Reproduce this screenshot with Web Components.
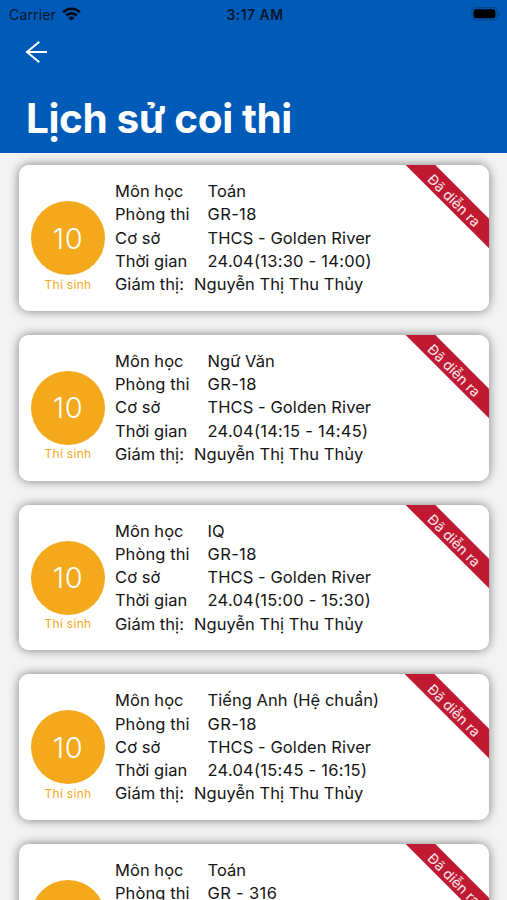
<!DOCTYPE html>
<html lang="vi">
<head>
  <meta charset="utf-8">
  <meta name="viewport" content="width=device-width, initial-scale=1.0">
  <title>Lịch sử coi thi</title>
  <style>
    * { box-sizing: border-box; }
    html { overflow: hidden; }
    body {
      margin: 0;
      height: 900px;
      overflow: hidden;
      background: #f4f4f4;
      font-family: Inter, 'Liberation Sans', sans-serif;
    }
  </style>
</head>
<body>
  <template id="status-bar">
    <style>
      :host {
        display: grid;
        grid-template-columns: 1fr auto 1fr;
        align-items: center;
        height: 28px;
        padding: 0 6px 0 9px;
        color: #06162c;
        font-size: 14px;
      }
      .left { display: flex; align-items: center; gap: 6px; letter-spacing: 0.15px; }
      .time { font-weight: 600; letter-spacing: 0.45px; }
      .battery { justify-self: end; }
      svg { display: block; }
    </style>
    <div class="left">
      <span><slot name="carrier"></slot></span>
      <svg width="19" height="14" viewBox="0 0 19 14" fill="none" stroke="#020b18" stroke-width="2.7">
        <path d="M1.2 5.2a11.7 11.7 0 0 1 16.6 0"/>
        <path d="M4.2 8.5a7.5 7.5 0 0 1 10.6 0"/>
        <path d="M9.5 13.8 6.4 10.7a4.4 4.4 0 0 1 6.2 0z" fill="#020b18" stroke="none"/>
      </svg>
    </div>
    <span class="time"><slot name="time"></slot></span>
    <svg class="battery" width="30" height="14" viewBox="0 0 30 14">
      <rect x=".9" y=".6" width="25.2" height="12.4" rx="3.6" fill="none" stroke="#034485" stroke-width="1.1"/>
      <rect x="2.6" y="2.3" width="21.8" height="9" rx="2.2" fill="#000"/>
      <path d="M27.6 4.8c1.9.7 1.9 3.3 0 4z" fill="#034485"/>
    </svg>
  </template>

  <template id="page-header">
    <style>
      :host {
        display: flex;
        flex-direction: column;
        height: 153px;
        background: #005bb8;
        color: #fff;
      }
      .back { display: block; margin: 12px 0 0 25px; }
      h1 {
        margin: 30px 0 0 26px;
        font-size: 40.5px;
        line-height: 50px;
        font-weight: 700;
        letter-spacing: -0.4px;
        white-space: nowrap;
      }
    </style>
    <slot name="status"></slot>
    <svg class="back" width="23" height="24" viewBox="0 0 23 24" fill="none" stroke="#fff" stroke-width="2">
      <path d="M22 12H2M14.3 1.8 2 12l12.3 10.2"/>
    </svg>
    <h1><slot></slot></h1>
  </template>

  <template id="count-badge">
    <style>
      :host {
        display: flex;
        flex-direction: column;
        align-items: center;
        width: 74px;
        color: #f3a91b;
      }
      .circle {
        display: flex;
        align-items: center;
        justify-content: center;
        width: 74px;
        height: 74px;
        border-radius: 50%;
        background: #f3a91b;
        color: #fff;
        font-size: 29px;
        font-weight: 350;
        letter-spacing: 0.6px;
      }
      .label { margin-top: 1.5px; font-size: 12px; line-height: 16px; letter-spacing: 0.3px; }
    </style>
    <div class="circle"><slot></slot></div>
    <div class="label">Thí sinh</div>
  </template>

  <template id="corner-ribbon">
    <style>
      :host {
        position: absolute;
        top: 24.25px;
        right: -40.75px;
        width: 150px;
        height: 21px;
        transform: rotate(45deg);
        background: #c01a33;
        color: #fbe9ec;
        font-size: 14px;
        line-height: 23px;
        text-align: center;
      }
    </style>
    <slot></slot>
  </template>

  <template id="exam-card">
    <style>
      :host {
        display: block;
        height: 145.75px;
        border-radius: 10px;
        box-shadow: 0 0 11px rgba(0, 0, 0, 0.5);
      }
      .card {
        position: relative;
        display: flex;
        height: 100%;
        border-radius: 10px;
        overflow: hidden;
        background: #fff;
      }
      count-badge { margin: 36px 0 0 12px; }
      .info {
        margin: 15px 0 0 10px;
        color: #141414;
        font-size: 16.5px;
        line-height: 23.25px;
        letter-spacing: 0.04px;
        white-space: nowrap;
      }
      .row { display: grid; grid-template-columns: 92.5px auto; }
      .row.wide { letter-spacing: 0.08px; }
      .row.staff { grid-template-columns: 79px auto; }
      slot[name="time"] { letter-spacing: 0.24px; }
      slot[name="room"] { letter-spacing: 0.35px; }
    </style>
    <div class="card">
      <count-badge><slot name="count"></slot></count-badge>
      <div class="info">
        <div class="row"><span>Môn học</span><slot name="subject"></slot></div>
        <div class="row wide"><span>Phòng thi</span><slot name="room"></slot></div>
        <div class="row wide"><span>Cơ sở</span><slot name="campus"></slot></div>
        <div class="row"><span>Thời gian</span><slot name="time"></slot></div>
        <div class="row staff"><span>Giám thị:</span><slot name="staff"></slot></div>
      </div>
      <corner-ribbon>Đã diễn ra</corner-ribbon>
    </div>
  </template>

  <template id="exam-list">
    <style>
      :host {
        display: flex;
        flex-direction: column;
        gap: 24px;
        padding: 12px 18px 0 19px;
      }
    </style>
    <slot></slot>
  </template>

  <page-header>
    <status-bar slot="status">
      <span slot="carrier">Carrier</span>
      <span slot="time">3:17 AM</span>
    </status-bar>
    Lịch sử coi thi
  </page-header>
  <exam-list>
    <exam-card>
      <span slot="count">10</span>
      <span slot="subject">Toán</span>
      <span slot="room">GR-18</span>
      <span slot="campus">THCS - Golden River</span>
      <span slot="time">24.04(13:30 - 14:00)</span>
      <span slot="staff">Nguyễn Thị Thu Thủy</span>
    </exam-card>
    <exam-card>
      <span slot="count">10</span>
      <span slot="subject">Ngữ Văn</span>
      <span slot="room">GR-18</span>
      <span slot="campus">THCS - Golden River</span>
      <span slot="time">24.04(14:15 - 14:45)</span>
      <span slot="staff">Nguyễn Thị Thu Thủy</span>
    </exam-card>
    <exam-card>
      <span slot="count">10</span>
      <span slot="subject">IQ</span>
      <span slot="room">GR-18</span>
      <span slot="campus">THCS - Golden River</span>
      <span slot="time">24.04(15:00 - 15:30)</span>
      <span slot="staff">Nguyễn Thị Thu Thủy</span>
    </exam-card>
    <exam-card>
      <span slot="count">10</span>
      <span slot="subject">Tiếng Anh (Hệ chuẩn)</span>
      <span slot="room">GR-18</span>
      <span slot="campus">THCS - Golden River</span>
      <span slot="time">24.04(15:45 - 16:15)</span>
      <span slot="staff">Nguyễn Thị Thu Thủy</span>
    </exam-card>
    <exam-card>
      <span slot="subject">Toán</span>
      <span slot="room">GR - 316</span>
    </exam-card>
  </exam-list>

  <script>
    // every element is a plain copy of the template with the same name
    ['status-bar', 'page-header', 'count-badge', 'corner-ribbon', 'exam-card', 'exam-list'].forEach(name => {
      customElements.define(name,
        class extends HTMLElement {
          constructor() {
            super();
            const template = document.getElementById(name);
            this.attachShadow({ mode: 'open' }).appendChild(
              template.content.cloneNode(true)
            );
          }
        }
      );
    });
  </script>
</body>
</html>
